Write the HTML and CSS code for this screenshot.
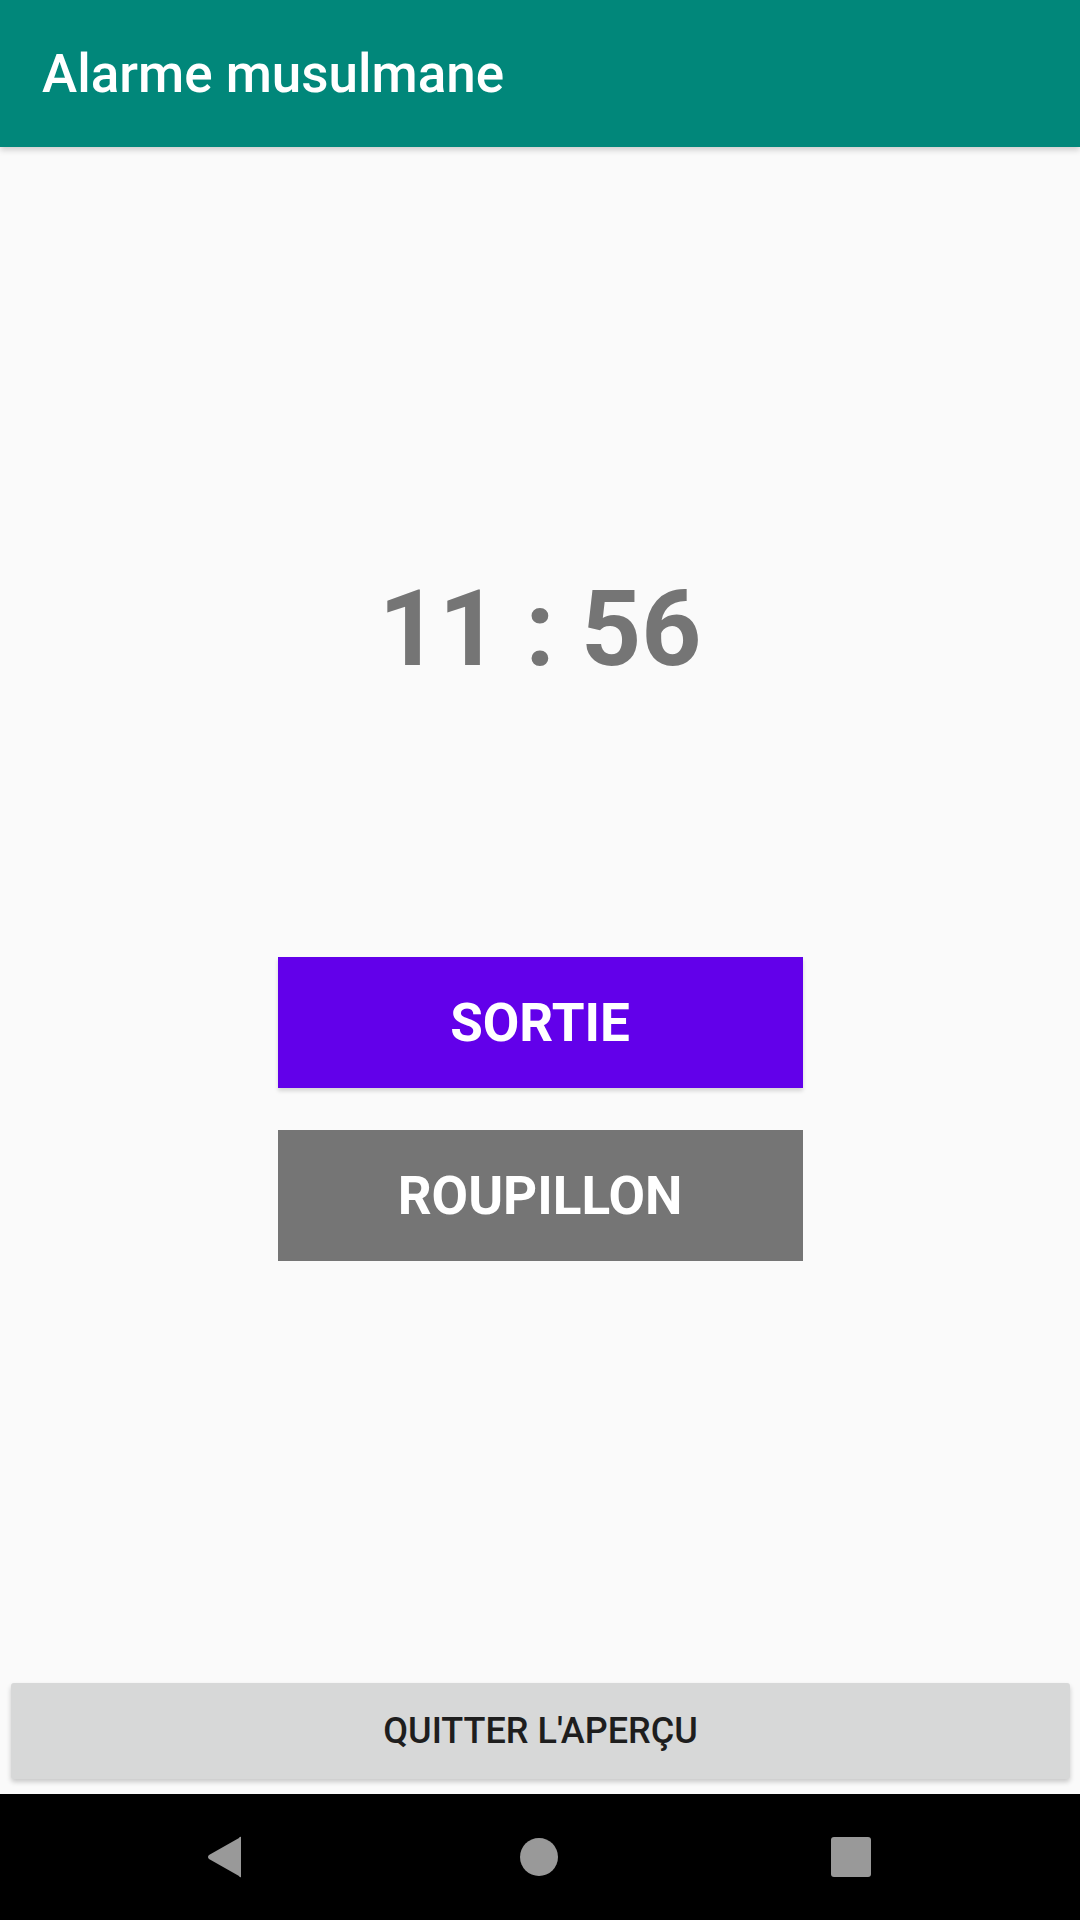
FILE: index.html
```html
<!DOCTYPE html>
<html lang="fr">
<head>
<meta charset="utf-8">
<title>Alarme musulmane</title>
<link rel="stylesheet" href="styles.css">
</head>
<body>
<div class="screen">
  <header class="appbar">
    <h1 class="title">Alarme musulmane</h1>
  </header>
  <main class="content">
    <div class="clock">11 : 56</div>
    <div class="actions">
      <button class="btn btn-exit">SORTIE</button>
      <button class="btn btn-snooze">ROUPILLON</button>
    </div>
  </main>
  <div class="footer">
    <button class="quit">QUITTER L'APERÇU</button>
  </div>
  <nav class="navbar">
    <svg class="nav-icon" width="40" height="42" viewBox="0 0 40 42"><path d="M35 1 L35 41 Q34 42 33 40 L3 23 Q1 21 3 19 L33 2 Q34 0 35 1 Z" fill="#999"/></svg>
    <svg class="nav-icon" width="40" height="40" viewBox="0 0 40 40"><circle cx="20" cy="20" r="19" fill="#999"/></svg>
    <svg class="nav-icon" width="40" height="40" viewBox="0 0 40 40"><rect x="0" y="0" width="40" height="40" rx="3" fill="#999"/></svg>
  </nav>
</div>
</body>
</html>
```

FILE: styles.css
```css
* { box-sizing: border-box; }
html, body {
  margin: 0;
  padding: 0;
  background: #fafafa;
  font-family: Roboto, "Liberation Sans", sans-serif;
}
.screen {
  width: 1080px;
  height: 1920px;
  display: flex;
  flex-direction: column;
  background: #fafafa;
}
.appbar {
  height: 147px;
  flex: none;
  background: #01877a;
  display: flex;
  align-items: center;
  padding-left: 42px;
  box-shadow: 0 3px 6px rgba(0,0,0,0.18);
  position: relative;
  z-index: 1;
}
.title {
  margin: 0;
  color: #ffffff;
  font-weight: 500;
  font-size: 53px;
  line-height: 1;
  padding-top: 2px;
}
.content {
  flex: 1;
  display: flex;
  flex-direction: column;
  align-items: center;
  padding-top: 430px;
}
.clock {
  font-size: 105px;
  line-height: 1;
  font-weight: 700;
  color: #757575;
  height: 105px;
}
.actions {
  margin-top: 275px;
  display: flex;
  flex-direction: column;
  gap: 42px;
}
.btn {
  width: 525px;
  height: 131px;
  border: none;
  border-radius: 0;
  font-family: Roboto, "Liberation Sans", sans-serif;
  font-weight: 700;
  font-size: 53px;
  color: #ffffff;
  padding: 0;
  margin: 0;
}
.btn-exit {
  background: #6200ea;
  box-shadow: 0 3px 4px rgba(0,0,0,0.15);
}
.btn-snooze {
  background: #757575;
}
.footer {
  flex: none;
  padding: 0 10px 15px 11px;
}
.quit {
  width: 100%;
  height: 96px;
  border: none;
  border-radius: 3px;
  background: #d7d8d8;
  box-shadow: 0 3px 5px rgba(0,0,0,0.2);
  font-family: Roboto, "Liberation Sans", sans-serif;
  font-weight: 500;
  font-size: 36px;
  color: #1e1e1e;
  letter-spacing: 0;
  padding: 0;
}
.navbar {
  flex: none;
  height: 126px;
  background: #000;
  display: flex;
  align-items: center;
  justify-content: space-between;
  padding: 0 209px 0 206px;
}
.nav-icon {
  display: block;
}
```
